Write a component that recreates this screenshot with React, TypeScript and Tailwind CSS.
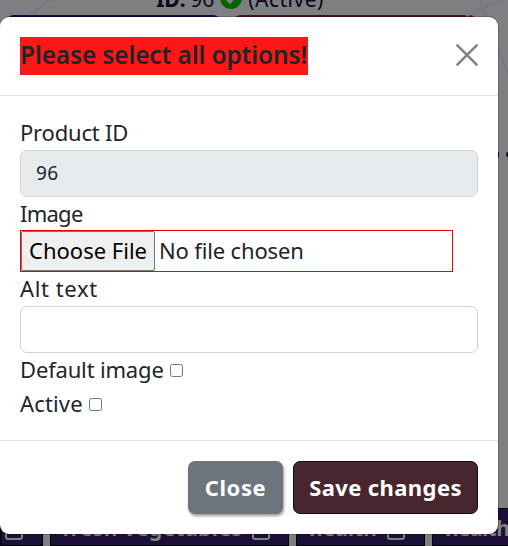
import React from "react";

function Tag({ label, className }: { label: string; className: string }) {
  return (
    <div className={`flex h-[38px] shrink-0 items-center border border-black bg-[#1c0f38] text-[21px] font-bold leading-none text-[#80807c] ${className}`}>
      <span className="whitespace-nowrap pt-[3px]">{label}</span>
      <svg className="ml-auto mt-[6px] shrink-0" width="18" height="19" viewBox="0 0 18 19" fill="none" stroke="#80807c" strokeWidth="2">
        <rect x="1" y="1" width="16" height="17" rx="2" />
      </svg>
    </div>
  );
}

function Backdrop() {
  return (
    <div className="relative flex h-full flex-col bg-[#7f7f81]">
      <svg className="absolute inset-0" width="508" height="546" fill="none" stroke="#767784" strokeWidth="2">
        <path d="M31 15L51 -1M466 16L508 -3M480 0L487 17M498 47L508 76" />
      </svg>
      <div className="flex h-[15px] items-end justify-center">
        <div className="mr-[28px] flex h-[31px] items-center text-[21px] leading-none text-[#080719]">
          <b className="w-[34px]">ID:</b>
          <span className="w-[30px]">96</span>
          <svg width="22" height="22" viewBox="0 0 22 22" className="mr-[6px] -translate-y-[2px]">
            <circle cx="11" cy="11" r="11" fill="#046404" />
            <path d="M6 11l4 4 7-8" fill="none" stroke="#7f7f81" strokeWidth="3" />
          </svg>
          <span className="tracking-[0.5px]">(Active)</span>
        </div>
      </div>
      <div className="flex gap-3 pl-[6px]">
        <div className="h-12 w-[215px] rounded-[8px] bg-[#1e0350]" />
        <div className="h-12 w-[244px] rounded-[8px] bg-[#590c18]" />
      </div>
      <div className="mt-[88px] flex h-[7px] items-center justify-end gap-[7px]">
        <span className="h-[5px] w-[4px] bg-[#071653]" />
        <span className="h-[5px] w-[2px] rounded-l bg-[#241017]" />
      </div>
      <div className="mt-auto flex gap-[7px] overflow-hidden">
        <Tag label="" className="w-[43px] pr-[19px]" />
        <Tag label="fresh vegetables" className="w-[239px] pl-[11px] pr-[18px] tracking-[0.4px]" />
        <Tag label="health" className="w-[129px] pl-[12px] pr-[19px]" />
        <Tag label="healthy" className="w-[129px] pl-[12px] tracking-[-0.6px]" />
      </div>
    </div>
  );
}

function Label({ children, className = "h-[34px]" }: { children: React.ReactNode; className?: string }) {
  return <label className={`flex items-center whitespace-nowrap text-[22px] leading-none ${className}`}>{children}</label>;
}

const box = "mt-px size-[13px] shrink-0 appearance-none rounded-[2.5px] border border-[#767676] bg-white";

export default function App() {
  return (
    <div className="relative h-[546px] w-[508px] overflow-hidden font-['Noto_Sans',sans-serif] text-[#212529]">
      <Backdrop />
      <div className="absolute left-[-1px] top-[16px] flex h-[519px] w-[500px] flex-col rounded-[10px] border border-black/20 bg-white bg-clip-padding">
        <header className="flex h-[79px] shrink-0 items-center justify-between border-b border-[#dee2e6] px-5">
          <h5 className="flex h-[38px] w-[288px] items-center whitespace-nowrap bg-[#ff1717] pb-px text-[24.5px] font-semibold leading-none tracking-[-0.16px]">Please select all options!</h5>
          <button aria-label="Close" className="-mt-[2px]">
            <svg width="22" height="22" viewBox="0 0 22 22" fill="none" stroke="#808080" strokeWidth="2.5" strokeLinecap="round">
              <path d="M1.4 1.4l19.2 19.2M20.6 1.4L1.4 20.6" />
            </svg>
          </button>
        </header>
        <main className="flex h-[344px] shrink-0 flex-col px-5 pt-5">
          <Label className="h-[34px] pb-[2px] tracking-[-0.2px]">Product ID</Label>
          <input readOnly value="96" className="h-[47px] w-full shrink-0 rounded-[7px] border border-[#ced4da] bg-[#e7ebee] px-[15px] pb-px text-[19px] tracking-[0.4px]" />
          <Label className="h-[33px] pb-[2px] tracking-[-0.75px]">Image</Label>
          <div className="flex h-[42px] w-[433px] shrink-0 items-center border border-[#f00000] pb-px text-[22px] leading-none">
            <button className="-mb-px h-[40px] w-[134px] whitespace-nowrap rounded-[2px] border border-[#767676] bg-[#efefef] pb-[3px] text-black">Choose File</button>
            <span className="ml-[4px] whitespace-nowrap pb-[2px] tracking-[-0.15px]">No file chosen</span>
          </div>
          <Label className="h-[34px] pb-[3px] tracking-[0.6px]">Alt text</Label>
          <input className="h-[47px] w-full shrink-0 rounded-[7px] border border-[#ced4da]" />
          <Label><span className="mr-[6px] pb-[3px] tracking-[-0.17px]">Default image</span><input type="checkbox" className={box} /></Label>
          <Label><span className="mr-[6px] pb-[3px] tracking-[0.15px]">Active</span><input type="checkbox" className={box} /></Label>
        </main>
        <footer className="flex h-[94px] shrink-0 items-center justify-end gap-[10px] border-t border-[#dee2e6] px-5 text-[22px] font-bold leading-none text-white">
          <button className="h-[53px] w-[95px] rounded-[7px] bg-[#6c757d] pb-[2px] tracking-[0.6px] shadow-[1px_2px_3px_rgba(0,0,0,0.4)]">Close</button>
          <button className="h-[53px] w-[185px] whitespace-nowrap rounded-[7px] border border-[#1c0718] bg-[#482630] pb-[2px] tracking-[0.4px]">Save changes</button>
        </footer>
      </div>
    </div>
  );
}
